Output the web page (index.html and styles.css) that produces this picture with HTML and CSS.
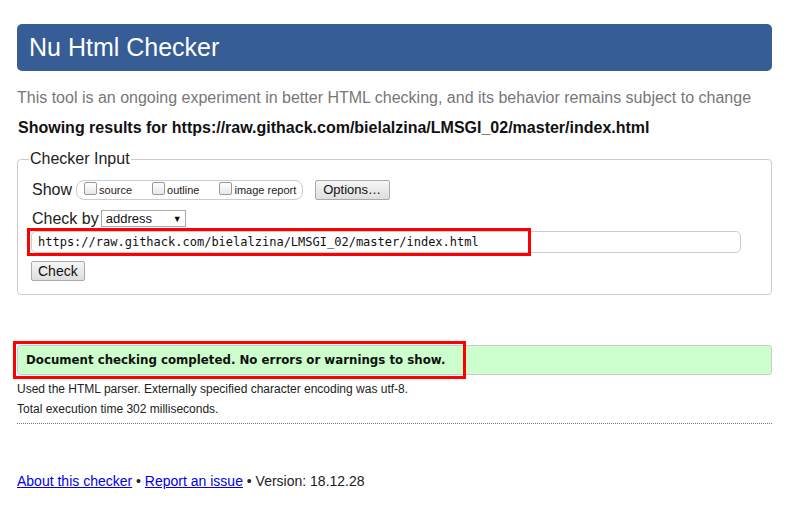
FILE: index.html
```html
<!DOCTYPE html>
<html>
<head>
<meta charset="utf-8">
<title>Nu Html Checker</title>
<link rel="stylesheet" href="styles.css">
</head>
<body>
<div class="page">
  <h1 class="banner">Nu Html Checker</h1>
  <p class="intro">This tool is an ongoing experiment in better HTML checking, and its behavior remains subject to change</p>
  <p class="showing">Showing results for https://raw.githack.com/bielalzina/LMSGI_02/master/index.html</p>
  <fieldset class="checker">
    <legend>Checker Input</legend>
    <div class="row show-row">
      <span class="lbl">Show</span>
      <span class="pill">
        <label><span class="cb"></span>source</label>
        <label><span class="cb"></span>outline</label>
        <label><span class="cb"></span>image report</label>
      </span>
      <span class="btn opt">Options…</span>
    </div>
    <div class="row by-row">
      <span class="lbl">Check by</span>
      <span class="select">address<span class="arrow">▼</span></span>
    </div>
    <div class="url-wrap">
      <div class="url">https://raw.githack.com/bielalzina/LMSGI_02/master/index.html</div>
      <div class="mark mark-url"></div>
    </div>
    <div class="row"><span class="btn check">Check</span></div>
  </fieldset>
  <div class="result-wrap">
    <div class="success">Document checking completed. No errors or warnings to show.</div>
    <div class="mark mark-ok"></div>
  </div>
  <p class="details first">Used the HTML parser. Externally specified character encoding was utf-8.</p>
  <p class="details second">Total execution time 302 milliseconds.</p>
  <hr class="dots">
  <p class="footer"><a href="#">About this checker</a> • <a href="#">Report an issue</a> • Version: 18.12.28</p>
</div>
</body>
</html>
```
FILE: styles.css
```css
html, body { margin: 0; padding: 0; background: #fff; }
body { font-family: "Liberation Sans", Arial, sans-serif; color: #222; }
.page { padding: 24px 16px 0 17px; }
.banner {
  margin: 0; height: 47px; background: #365d95; color: #fff;
  border-radius: 5px; font-weight: normal; font-size: 25px;
  line-height: 47px; padding-left: 12px;
}
.intro { margin: 17px 0 0 0; color: #777; font-size: 16px; line-height: 20px; }
.showing { margin: 10px 0 0 1px; font-weight: bold; font-size: 16px; line-height: 20px; color: #111; }
.checker {
  margin: 12px 0 0 0; border: 1px solid #ccc; border-radius: 4px;
  padding: 2px 13px 13px 13px;
}
.checker legend { font-size: 16px; padding: 0 1px; margin-left: -2px; color: #222; }
.row { display: flex; align-items: center; }
.lbl { font-size: 16px; margin-left: 1px; }
.show-row { margin-top: 9px; height: 22px; }
.pill {
  display: flex; align-items: center; margin-left: 4px;
  border: 1px solid #ccc; border-radius: 8px; height: 18px; padding: 0 6px 0 7px;
  font-size: 11px;
}
.pill label { display: flex; align-items: center; margin-right: 20px; }
.pill label:last-child { margin-right: 0; }
.cb {
  display: inline-block; width: 11px; height: 11px; border: 1px solid #999;
  border-radius: 2px; background: linear-gradient(#fff, #e8e8e8); margin-right: 2px; margin-top: -4px;
}
.btn {
  display: inline-block; border: 1px solid #aaa; border-radius: 2px;
  background: linear-gradient(#f6f6f6, #dedede); font-size: 13px; color: #111;
  line-height: 18px; padding: 0 7px;
}
.opt { margin-left: 12px; padding: 0 8px 0 7px; }
.by-row { margin-top: 9px; height: 17px; }
.select {
  display: inline-flex; align-items: center; justify-content: space-between;
  margin-left: 2px; width: 76px; height: 15px; border: 1px solid #aaa;
  font-size: 13px; padding: 0 3px 0 4px; color: #111;
}
.arrow { font-size: 9px; }
.url-wrap { position: relative; margin-top: 4px; }
.url {
  height: 20px; border: 1px solid #ccc; border-radius: 5px;
  font-family: "DejaVu Sans Mono", monospace; font-size: 12px; line-height: 20px;
  padding-left: 6px; margin-right: 17px; color: #111;
}
.mark { position: absolute; border: 3px solid #f00; box-sizing: border-box; }
.mark-url { left: -4px; top: -3px; width: 504px; height: 28px; }
.check { font-size: 14px; margin-top: 8px; padding: 0 6px; line-height: 18px; }
.result-wrap { position: relative; margin-top: 50px; }
.success {
  height: 28px; background: #ccffcc; border: 1px solid #ccc; border-radius: 3px;
  font-family: "DejaVu Sans", Verdana, sans-serif; font-weight: bold; font-size: 11.8px;
  line-height: 28px; padding-left: 8px; color: #111;
}
.mark-ok { left: -4px; top: -4px; width: 453px; height: 38px; }
.details { margin: 0; font-size: 12px; line-height: 15px; color: #222; }
.details.first { margin-top: 7px; }
.details.second { margin-top: 5px; }
.dots { margin: 6px 0 0 0; border: 0; border-top: 1px dotted #777; height: 0; }
.footer { margin: 49px 0 0 0; font-size: 14px; line-height: 17px; }
.footer a { color: #0000ee; text-decoration: underline; }
```
